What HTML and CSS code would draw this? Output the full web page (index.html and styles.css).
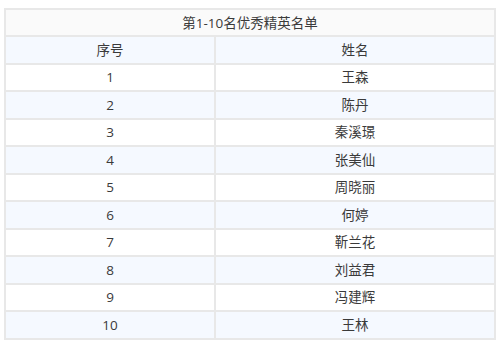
FILE: index.html
```html
<!DOCTYPE html>
<html lang="zh-CN">
<head>
<meta charset="utf-8">
<title>第1-10名优秀精英名单</title>
<link rel="stylesheet" href="styles.css">
</head>
<body>
<table class="roster">
  <colgroup><col class="col-no"><col class="col-name"></colgroup>
  <thead>
    <tr class="title-row"><th colspan="2">第1-10名优秀精英名单</th></tr>
    <tr class="head-row"><th>序号</th><th>姓名</th></tr>
  </thead>
  <tbody>
    <tr><td>1</td><td>王森</td></tr>
    <tr><td>2</td><td>陈丹</td></tr>
    <tr><td>3</td><td>秦溪璟</td></tr>
    <tr><td>4</td><td>张美仙</td></tr>
    <tr><td>5</td><td>周晓丽</td></tr>
    <tr><td>6</td><td>何婷</td></tr>
    <tr><td>7</td><td>靳兰花</td></tr>
    <tr><td>8</td><td>刘益君</td></tr>
    <tr><td>9</td><td>冯建辉</td></tr>
    <tr><td>10</td><td>王林</td></tr>
  </tbody>
</table>
</body>
</html>
```
FILE: styles.css
```css
html, body {
  margin: 0;
  padding: 0;
  background: #ffffff;
}
body {
  padding: 8px 4px 0 4px;
  font-family: "Open Sans", "Noto Sans CJK SC", sans-serif;
  font-size: 13.5px;
  color: #3a3a3a;
}
.roster {
  width: 492px;
  border-collapse: collapse;
  border: 2px solid #e8e8e8;
  table-layout: fixed;
}
.roster th,
.roster td {
  border: 2px solid #e8e8e8;
  padding: 0;
  height: 25.5px;
  text-align: center;
  font-weight: normal;
  line-height: 16px;
}
.col-no { width: 210px; }
.title-row th {
  background: #fafafa;
  height: 25px;
}
.head-row th {
  background: #f5f9ff;
}
.roster tbody tr:nth-child(even) td {
  background: #f5f9ff;
}
.roster tbody tr:nth-child(odd) td {
  background: #ffffff;
}
```
